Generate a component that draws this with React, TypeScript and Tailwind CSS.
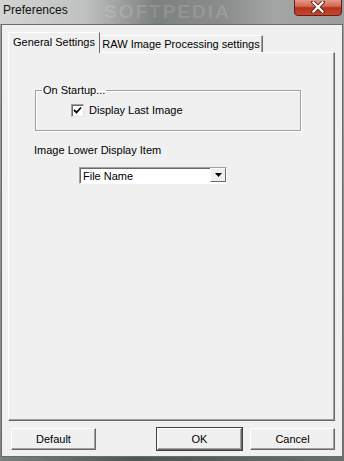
import React from 'react';

const font = { fontFamily: '"Liberation Sans", Arial, sans-serif' };

function ClassicButton({ label, isDefault = false }: { label: string; isDefault?: boolean }) {
  return (
    <div
      className={`w-[85px] h-[22px] flex items-center justify-center text-[11px] text-black bg-[#f0f0f0] border border-t-white border-l-white border-r-[#696969] border-b-[#696969] shadow-[inset_-1px_-1px_0_#a0a0a0] ${
        isDefault ? 'outline outline-1 outline-[#404040]' : ''
      }`}
    >
      {label}
    </div>
  );
}

export default function App() {
  return (
    <div className="w-[344px] h-[461px] flex flex-col bg-[#8f9492] overflow-hidden" style={font}>
      {/* title bar */}
      <div className="relative h-[24px] shrink-0 bg-[linear-gradient(90deg,#d3d5d4_0%,#bfc1c0_25%,#7c807e_45%,#8a8d8c_65%,#a3a6a5_80%,#9a9d9c_100%)]">
        <span className="absolute left-[3px] top-[3px] text-[12px] leading-[15px] text-[#111]">Preferences</span>
        <span className="absolute left-[104px] top-[2px] text-[19px] leading-[20px] font-bold tracking-[2px] text-white/15 select-none">
          SOFTPEDIA
        </span>
        <div className="absolute right-[2px] top-[-2px] w-[48px] h-[18px] rounded-b-[4px] border border-[#5a2019] bg-[linear-gradient(180deg,#e8a08f_0%,#d46a52_45%,#b7321b_55%,#c8462c_100%)] flex items-center justify-center">
          <svg width="14" height="12" viewBox="0 0 14 12">
            <path d="M2 1 L12 11 M12 1 L2 11" stroke="#5b2a22" strokeWidth="4" strokeLinecap="square" />
            <path d="M2.5 1.5 L11.5 10.5 M11.5 1.5 L2.5 10.5" stroke="#ffffff" strokeWidth="2.2" strokeLinecap="square" />
          </svg>
        </div>
      </div>

      <div className="flex flex-1">
        <div className="w-[3px] bg-[linear-gradient(180deg,#9aa09c,#7f8682)]" />
        {/* client */}
        <div className="flex-1 flex flex-col bg-[#f0f0f0] border border-[#6c6c6c] pl-[6px] pr-[7px] pt-[7px] text-[11px] text-black">
          {/* tabs */}
          <div className="flex items-end h-[20px] relative z-10">
            <div className="w-[92px] h-[21px] -mb-px bg-[#f0f0f0] border-t border-l border-t-white border-l-white border-r border-r-[#696969] flex items-center justify-center pb-[1px]">
              General Settings
            </div>
            <div className="w-[163px] h-[17px] bg-[#f0f0f0] border-t border-t-white border-r border-r-[#696969] shadow-[inset_-1px_0_0_#a0a0a0] flex items-center justify-center">
              RAW Image Processing settings
            </div>
          </div>
          {/* panel */}
          <div className="h-[369px] bg-[#f0f0f0] border border-t-white border-l-white border-r-[#696969] border-b-[#696969] shadow-[inset_-1px_-1px_0_#a0a0a0] pl-[26px]">
            <fieldset className="mt-[31px] w-[266px] h-[47px] border border-[#a0a0a0] shadow-[inset_1px_1px_0_#ffffff,1px_1px_0_#ffffff] p-0 m-0">
              <legend className="ml-[6px] px-[1px] leading-[13px]">On Startup...</legend>
              <div className="flex items-center pl-[35px] mt-[7px]">
                <div className="w-[13px] h-[13px] bg-white border border-t-[#a0a0a0] border-l-[#a0a0a0] border-r-[#e3e3e3] border-b-[#e3e3e3] shadow-[inset_1px_1px_0_#696969] flex items-center justify-center">
                  <svg width="9" height="9" viewBox="0 0 9 9">
                    <path d="M1 4 L3.5 6.5 L8 1.5" stroke="#000" strokeWidth="1.8" fill="none" />
                  </svg>
                </div>
                <span className="ml-[5px] leading-[13px]">Display Last Image</span>
              </div>
            </fieldset>
            <div className="mt-[13px] -ml-[1px] leading-[13px]">Image Lower Display Item</div>
            <div className="mt-[10px] ml-[44px] w-[148px] h-[17px] flex bg-white border border-t-[#a0a0a0] border-l-[#a0a0a0] border-r-white border-b-white shadow-[inset_1px_1px_0_#696969]">
              <span className="flex-1 pl-[3px] pt-[1px] leading-[14px]">File Name</span>
              <div className="w-[16px] h-[14px] mt-[0px] mr-[0px] bg-[#f0f0f0] border border-t-white border-l-white border-r-[#696969] border-b-[#696969] flex items-center justify-center">
                <svg width="7" height="4" viewBox="0 0 7 4">
                  <path d="M0 0 H7 L3.5 4 Z" fill="#000" />
                </svg>
              </div>
            </div>
          </div>
          {/* buttons */}
          <div className="flex mt-[7px] h-[22px]">
            <div className="ml-[3px]">
              <ClassicButton label="Default" />
            </div>
            <div className="ml-[61px]">
              <ClassicButton label="OK" isDefault />
            </div>
            <div className="ml-[8px]">
              <ClassicButton label="Cancel" />
            </div>
          </div>
        </div>
        <div className="w-[3px] bg-[linear-gradient(180deg,#9aa09c,#6f7672)]" />
      </div>
      <div className="h-[4px] shrink-0 bg-[linear-gradient(90deg,#7a807c,#4f5451_40%,#6a706c)]" />
    </div>
  );
}
